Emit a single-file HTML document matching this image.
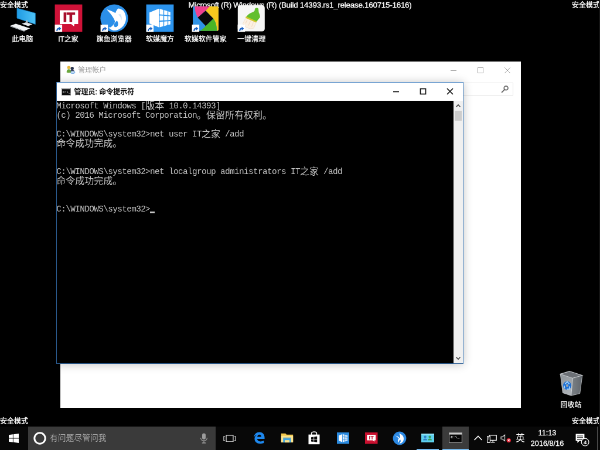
<!DOCTYPE html>
<html lang="zh-CN">
<head>
<meta charset="utf-8">
<title>Windows 10 安全模式</title>
<style>
html,body{margin:0;padding:0;background:#000;overflow:hidden;}
body{width:600px;height:450px;position:relative;}
#desk{position:absolute;left:0;top:0;width:1024px;height:768px;background:#000;transform:scale(0.5859375);transform-origin:0 0;will-change:transform;overflow:hidden;
  font-family:"Liberation Sans","Noto Sans CJK SC",sans-serif;color:#fff;font-size:12px;}
#desk *{box-sizing:border-box;}
.abs{position:absolute;}
.safe,.wm,.lbl,.clk{-webkit-text-stroke:0.3px #fff;}
.safe{position:absolute;font-size:12px;line-height:16px;color:#fff;white-space:nowrap;}
.wm{position:absolute;left:0;width:1024px;top:1px;text-align:center;font-size:13.5px;letter-spacing:-0.3px;line-height:16px;color:#fff;white-space:nowrap;}
.dicon{position:absolute;width:78px;text-align:center;}
.dicon .pic{position:absolute;left:15px;top:0;width:48px;height:48px;}
.dicon .lbl{position:absolute;left:-20px;width:118px;top:52px;text-align:center;font-size:12px;line-height:16px;color:#fff;white-space:nowrap;text-shadow:0 1px 2px rgba(0,0,0,.9);}
.sc{position:absolute;left:0;bottom:0;width:11px;height:11px;}
/* windows */
.win{position:absolute;background:#fff;}
.ctl{position:absolute;top:0;height:30px;width:46px;}
#txt{position:absolute;left:-0.8px;top:1px;font-family:"Liberation Mono","Noto Sans Mono CJK SC",monospace;font-size:14.4px;letter-spacing:-0.64px;color:#c4c4c4;}
#txt .ln{height:16px;line-height:16px;white-space:pre;overflow:visible;}
#txt b{letter-spacing:0;position:relative;top:-2px;font-weight:normal;font-size:16px;line-height:16px;vertical-align:top;display:inline-block;height:16px;font-family:"Noto Sans Mono CJK SC","Noto Sans CJK SC",monospace;}
#txt i{display:inline-block;width:8px;height:3px;background:#c4c4c4;vertical-align:-3px;}
/* taskbar */
#tb{position:absolute;left:0;top:728px;width:1024px;height:40px;background:#080808;}
.tbi{position:absolute;top:0;width:48px;height:40px;}
.tbi svg{position:absolute;}
</style>
</head>
<body>
<div id="desk">

<!-- corner / watermark texts -->
<div class="safe" style="left:0;top:1px;">安全模式</div>
<div class="safe" style="right:0;top:1px;">安全模式</div>
<div class="safe" style="left:0;top:711px;">安全模式</div>
<div class="safe" style="right:0;top:711px;">安全模式</div>
<div class="wm">Microsoft (R) Windows (R) (Build 14393.rs1_release.160715-1616)</div>

<div class="abs" style="left:1021.5px;top:0;width:2.5px;height:728px;background:#141414;"></div>
<!-- DESKTOP ICONS -->
<svg width="0" height="0" style="position:absolute"><defs>
  <g id="scarrow">
    <rect x="0" y="0" width="12.5" height="12.5" fill="#fff"/>
    <path d="M2.6 11 C2.6 7.4 4.4 5.6 7 5.6 V3.4 L10.8 6.8 L7 10.2 V8 C5.4 8 4.6 9.2 4.6 11 Z" fill="#1b62c4"/>
  </g>
</defs></svg>

<!-- 此电脑 -->
<div class="dicon" style="left:-0.8px;top:7px;">
  <svg class="pic" viewBox="0 0 48 48">
    <defs><linearGradient id="mon" x1="0" y1="0" x2="1" y2="0"><stop offset="0" stop-color="#1f9be4"/><stop offset="1" stop-color="#4fc3f7"/></linearGradient></defs>
    <path d="M15 7 L46.3 15.4 V34.4 L15 24 Z" fill="url(#mon)"/>
    <path d="M15 7 L46.3 15.4 V34.4 L15 24 Z" fill="none" stroke="#1683c8" stroke-width="0.8"/>
    <path d="M23 33.6 L30.5 31 L41.5 34.6 L34 37.6 Z" fill="#e4e8ec"/>
    <path d="M30 27 L33.5 28.2 L33.5 33 L30 32 Z" fill="#aeb6bd"/>
    <path d="M3.4 37 L13 33.6 L37.4 41.6 L27.6 45.8 Z" fill="#f2f4f6"/>
    <path d="M3.4 37 L27.6 45.8 L27.6 47 L3.4 38.2 Z" fill="#b4bcc4"/>
  </svg>
  <div class="lbl">此电脑</div>
</div>

<!-- IT之家 -->
<div class="dicon" style="left:77.5px;top:7px;">
  <svg class="pic" viewBox="0 0 48 48">
    <rect x="0.6" y="0.6" width="46.8" height="46.8" fill="#cf1238"/>
    <path d="M9 10.6 H40.4 V34 H34 L33.4 38 L28.4 34 H9 Z" fill="#fff"/>
    <text x="24.8" y="30" text-anchor="middle" font-family="Liberation Sans, sans-serif" font-weight="bold" font-size="21.5" fill="#a80e2c" stroke="#a80e2c" stroke-width="1.3" textLength="20" lengthAdjust="spacingAndGlyphs">IT</text>
    <use href="#scarrow" x="0.6" y="35"/>
  </svg>
  <div class="lbl">IT之家</div>
</div>

<!-- 旗鱼浏览器 -->
<div class="dicon" style="left:155.8px;top:7px;">
  <svg class="pic" viewBox="0 0 48 48">
    <circle cx="24" cy="24.2" r="23.6" fill="#2b8fe8"/>
    <path d="M11 9 C15 10 20 12 26 15.2 C27 12 28.6 9.4 30.6 7.4 C34 7.6 37 9 39.4 11 C42.4 15 44 19.6 44 25 C43.6 33 39 39.6 31.6 43.2 C28.6 44.6 25.4 45.2 22.2 45 C19 44 16.4 42.2 14 39.8 C16.4 40 18.6 39.4 20.4 37.4 C23.4 34.4 25 31.6 25.2 29.4 C23.4 23.4 18 16.4 11 9 Z" fill="#fff"/>
    <path d="M28.6 28.2 C31.2 31.6 31.4 36 28.6 38.6 C25.6 40.6 22.6 38.4 23.4 35 C24.2 32.2 26.4 30.4 28.6 28.2 Z" fill="#2b8fe8"/>
    <path d="M30.4 18 C34 20 36.4 24 35.6 29 C37.6 25 37 20.4 34.4 17 Z" fill="#9fcdf6" opacity=".5"/>
    <use href="#scarrow" x="0.6" y="35"/>
  </svg>
  <div class="lbl">旗鱼浏览器</div>
</div>

<!-- 软媒魔方 -->
<div class="dicon" style="left:234px;top:7px;">
  <svg class="pic" viewBox="0 0 48 48">
    <rect x="0.6" y="0.6" width="46.8" height="46.8" fill="#2c94ee"/>
    <path d="M6.4 14.2 L22 7.8 V39.6 L6.4 33.2 Z" fill="#fff"/>
    <g fill="#fff">
      <path d="M23.4 8 L29.8 9.9 V18 L23.4 17.4 Z"/><path d="M31.2 10.3 L36.8 12 V18.8 L31.2 18.2 Z"/><path d="M38.2 12.4 L41.8 13.5 V19.4 L38.2 19 Z"/>
      <path d="M23.4 19.4 L29.8 19.8 V27.8 L23.4 28.2 Z"/><path d="M31.2 20 L36.8 20.4 V27.4 L31.2 27.7 Z"/><path d="M38.2 20.6 L41.8 20.9 V27 L38.2 27.3 Z"/>
      <path d="M23.4 30.2 L29.8 29.8 V37.8 L23.4 39.6 Z"/><path d="M31.2 29.7 L36.8 29.3 V35.8 L31.2 37.4 Z"/><path d="M38.2 29.2 L41.8 28.9 V34.4 L38.2 35.4 Z"/>
    </g>
    <use href="#scarrow" x="0.6" y="35"/>
  </svg>
  <div class="lbl">软媒魔方</div>
</div>

<!-- 软媒软件管家 -->
<div class="dicon" style="left:311.7px;top:7px;">
  <svg class="pic" viewBox="0 0 48 48">
    <defs><clipPath id="rr"><rect x="0.6" y="0.6" width="46.8" height="46.8" rx="3"/></clipPath></defs>
    <g transform="translate(1.5,3.3) scale(0.9375,0.895)"><g clip-path="url(#rr)">
      <rect x="0" y="0" width="48" height="48" fill="#2f93e6"/>
      <path d="M4 0 H33 L24 9 L9.5 22 C6 15 4 8 4 0 Z" fill="#f2418f"/>
      <path d="M32 0 H48 V48 H44 C44.6 39 42.6 30 38 24 L24 9 Z" fill="#f7c81e"/>
      <path d="M44 48 H12 C17 45.6 21 42.4 24 38 L38 24 C42.6 30 44.6 39 44 48 Z" fill="#49b526"/>
      <path d="M24 9 L38 24 L24 38 L9.5 22 Z" fill="#0a0a0a"/>
    </g></g>
    <use href="#scarrow" x="0.6" y="35"/>
  </svg>
  <div class="lbl">软媒软件管家</div>
</div>

<!-- 一键清理 -->
<div class="dicon" style="left:390.2px;top:7px;">
  <svg class="pic" viewBox="0 0 48 48">
    <rect x="0.8" y="2" width="46" height="44.6" rx="4.5" fill="#f6f6f5"/>
    <path d="M9.4 33.4 L14.4 23.6 L32.4 31 L28 41 C24 42.4 20 42 17.6 40.4 C14.4 39.6 11.4 37 9.4 33.4 Z" fill="#fbf0e2" stroke="#f0dcc6" stroke-width="0.8"/>
    <path d="M14 33 L17 27 M19 36.6 L22.4 29 M24.4 38.6 L27.4 31.4" stroke="#f1d9c0" stroke-width="1.1"/>
    <path d="M30 8 C31.6 6 35 6 36 8 L36.6 14 C38 17 39 20 38.8 22.6 L32.4 30.6 L14.8 22.6 C17.4 18.4 20.6 15.6 24.4 14.4 C27 13.6 29 12.4 29.6 11 Z" fill="#62bf2e"/>
    <path d="M14.4 22.2 L32.6 30.4" stroke="#cfc52a" stroke-width="2.6"/>
    <use href="#scarrow" x="0.6" y="35"/>
  </svg>
  <div class="lbl">一键清理</div>
</div>

<!-- 回收站 -->
<div class="dicon" style="left:935.5px;top:631px;">
  <svg class="pic" viewBox="0 0 48 48">
    <defs><linearGradient id="binf" x1="0" y1="0" x2="0.3" y2="1"><stop offset="0" stop-color="#9aa0a6"/><stop offset="1" stop-color="#bcc1c6"/></linearGradient>
    <linearGradient id="binr" x1="0" y1="0" x2="1" y2="0"><stop offset="0" stop-color="#8a9096"/><stop offset="1" stop-color="#6c7278"/></linearGradient></defs>
    <path d="M5.3 7.6 L26.4 14.4 L23.7 44.2 L9.4 39.4 Z" fill="url(#binf)" opacity=".92"/>
    <path d="M26.4 14.4 L42.8 10 L38.7 40.6 L23.7 44.2 Z" fill="url(#binr)" opacity=".9"/>
    <path d="M5.3 7.4 L21 2.6 L42.8 9.8 L26.4 14.4 Z" fill="#6c7076" stroke="#c4c8cc" stroke-width="1.1"/>
    <path d="M5.3 7.6 L9.4 39.4 L23.7 44.2 L38.7 40.6 L42.8 10" fill="none" stroke="#c6cace" stroke-width="0.8"/>
    <path d="M26.4 14.4 L23.7 44.2" stroke="#dfe3e6" stroke-width="0.9"/>
    <circle cx="17" cy="27" r="7.2" fill="#1c6fd6"/>
    <path d="M13.4 24.4 L17 20.6 L20.6 24.4 M20.8 28.4 L21.4 32.8 L16.6 33.2 M12.6 31.6 L11.8 27.2" stroke="#9fd2ff" stroke-width="1.8" fill="none"/>
    <circle cx="17" cy="27" r="2.2" fill="#9aa2a8"/>
  </svg>
  <div class="lbl">回收站</div>
</div>
<!--/ICONS-->

<!-- BACK WINDOW -->
<!--BACKWIN-->
<div class="win" id="bw" style="left:103px;top:105px;width:785.5px;height:590.5px;background:#fff;">
  <!-- title icon: two users -->
  <svg class="abs" style="left:9.5px;top:6.5px;" width="16" height="14.5" viewBox="0 0 18 17">
    <circle cx="11.6" cy="5.6" r="3.2" fill="#2a3550"/>
    <path d="M7 13.2 C7 9.6 9 8.6 11.6 8.6 C14.4 8.6 16.2 9.8 16.4 12.6 Z" fill="#303c5c"/>
    <ellipse cx="12.6" cy="13.6" rx="5" ry="2.9" fill="#7fb2e6"/>
    <ellipse cx="12.6" cy="13" rx="3.4" ry="1.6" fill="#cfe4f8"/>
    <circle cx="4.8" cy="3.8" r="3.2" fill="#e6b83c"/>
    <path d="M0.4 13.6 C0.4 9 2.2 7.2 4.8 7.2 C7.4 7.2 9 9 9 13.6 C6 14.8 3 14.8 0.4 13.6 Z" fill="#6aa63c"/>
  </svg>
  <div class="abs" style="left:30.2px;top:7px;font-size:12px;line-height:17px;color:#9a9a9a;white-space:nowrap;">管理帐户</div>
  <!-- controls (inactive, grey) -->
  <svg class="abs" style="left:648px;top:0;" width="138" height="30" viewBox="0 0 138 30">
    <path d="M18 15.5 H28" stroke="#a0a0a0" stroke-width="1" fill="none"/>
    <rect x="64.5" y="10.5" width="9" height="9" stroke="#a0a0a0" stroke-width="1" fill="none"/>
    <path d="M110 10 L120 20 M120 10 L110 20" stroke="#a0a0a0" stroke-width="1" fill="none"/>
  </svg>
  <!-- search box -->
  <div class="abs" style="left:540px;top:36px;width:233px;height:22px;border:1px solid #e2e2e2;background:#fff;"></div>
  <svg class="abs" style="left:752px;top:40px;" width="14" height="14" viewBox="0 0 14 14">
    <circle cx="8.6" cy="5.2" r="3.4" stroke="#6a6a6a" stroke-width="1.7" fill="none"/>
    <path d="M6.2 7.8 L1.6 12.4" stroke="#6a6a6a" stroke-width="2" fill="none" stroke-linecap="round"/>
  </svg>
</div>

<div class="win" id="cw" style="left:96px;top:140px;width:695px;height:481px;background:#fff;border:1px solid #3f7fc0;border-left-color:#2c5f96;border-bottom-color:#2c5f96;box-shadow:0 1px 15px 0 rgba(0,0,0,.24);">
  <!-- title icon -->
  <svg class="abs" style="left:8px;top:9px;" width="16" height="13" viewBox="0 0 16 13">
    <rect x="0" y="0" width="16" height="13" fill="#0c0c0c"/>
    <rect x="0" y="0" width="16" height="2.2" fill="#d8d8d8"/>
    <rect x="0.5" y="0.5" width="15" height="12" fill="none" stroke="#8a8a8a" stroke-width="1"/>
    <text x="2" y="9.5" font-family="Liberation Mono, monospace" font-size="5.5" fill="#fff" font-weight="bold">C:\_</text>
  </svg>
  <div class="abs" style="left:29.5px;top:8.2px;font-size:12px;line-height:17px;color:#000;font-weight:500;-webkit-text-stroke:0.25px #000;white-space:nowrap;">管理员: 命令提示符</div>
  <svg class="abs" style="left:556.2px;top:0;" width="138" height="30" viewBox="0 0 138 30">
    <path d="M18 15.5 H28" stroke="#111" stroke-width="1.7" fill="none"/>
    <rect x="64.5" y="10.5" width="9" height="9" stroke="#111" stroke-width="1.7" fill="none"/>
    <path d="M110 10 L120 20 M120 10 L110 20" stroke="#111" stroke-width="1.7" fill="none"/>
  </svg>
  <!-- console -->
  <div class="abs" id="con" style="left:0;top:31px;width:677px;height:448px;background:#000;overflow:hidden;">
<div id="txt">
<div class="ln">Microsoft Windows [<b>版本</b> 10.0.14393]</div>
<div class="ln">(c) 2016 Microsoft Corporation<b>。保留所有权利。</b></div>
<div class="ln"></div>
<div class="ln">C:\WINDOWS\system32&gt;net user IT<b>之家</b> /add</div>
<div class="ln"><b>命令成功完成。</b></div>
<div class="ln"></div>
<div class="ln"></div>
<div class="ln">C:\WINDOWS\system32&gt;net localgroup administrators IT<b>之家</b> /add</div>
<div class="ln"><b>命令成功完成。</b></div>
<div class="ln"></div>
<div class="ln"></div>
<div class="ln">C:\WINDOWS\system32&gt;<i></i></div>
</div>
  </div>
  <!-- scrollbar -->
  <div class="abs" style="left:677px;top:31px;width:16px;height:448px;background:#f0f0f0;">
    <svg class="abs" style="left:0;top:0;" width="16" height="17" viewBox="0 0 16 17"><path d="M4.5 10.5 L8 7 L11.5 10.5" stroke="#404040" stroke-width="1.6" fill="none"/></svg>
    <div class="abs" style="left:2px;top:17px;width:12px;height:17px;background:#cdcdcd;"></div>
    <svg class="abs" style="left:0;bottom:0;" width="16" height="17" viewBox="0 0 16 17"><path d="M4.5 6.5 L8 10 L11.5 6.5" stroke="#404040" stroke-width="1.6" fill="none"/></svg>
  </div>
</div>
<!--/WINS-->

<!-- TASKBAR -->
<div id="tb">
  <!-- start -->
  <svg class="abs" style="left:15px;top:12px;" width="17" height="16" viewBox="0 0 17 16">
    <path d="M0 2.3 L6.9 1.3 V7.6 H0 Z M7.8 1.2 L17 0 V7.6 H7.8 Z M0 8.4 H6.9 V14.7 L0 13.7 Z M7.8 8.4 H17 V16 L7.8 14.8 Z" fill="#fff"/>
  </svg>
  <!-- search box -->
  <div class="abs" style="left:48px;top:0;width:320px;height:40px;background:#3a3a3a;"></div>
  <svg class="abs" style="left:57px;top:9px;" width="22" height="22" viewBox="0 0 22 22"><circle cx="11" cy="11" r="9.2" stroke="#fff" stroke-width="3" fill="none"/></svg>
  <div class="abs" style="left:85px;top:10px;font-size:13.8px;line-height:20px;color:#a6a6a6;white-space:nowrap;">有问题尽管问我</div>
  <!-- mic -->
  <svg class="abs" style="left:340px;top:11px;" width="16" height="18" viewBox="0 0 16 18">
    <rect x="5" y="0.5" width="6" height="10.5" rx="3" fill="#9c9c9c"/>
    <path d="M2.5 8 C2.5 15 13.5 15 13.5 8" stroke="#9c9c9c" stroke-width="1.3" fill="none"/>
    <path d="M8 13.5 V17 M4.8 17 H11.2" stroke="#9c9c9c" stroke-width="1.3" fill="none"/>
  </svg>
  <!-- task view -->
  <svg class="abs" style="left:381px;top:13.6px;" width="22" height="12.8" viewBox="0 0 24 14">
    <rect x="5.5" y="1" width="13" height="12" stroke="#dcdcdc" stroke-width="1.4" fill="none"/>
    <path d="M3.4 3 H1 V11 H3.4 M20.6 3 H23 V11 H20.6" stroke="#dcdcdc" stroke-width="1.3" fill="none"/>
  </svg>
  <!-- edge -->
  <svg class="abs" style="left:431.5px;top:9px;" width="20.5" height="20.5" viewBox="0 0 22 22">
    <path d="M1.2 10.2 C2 4 6.5 0.6 11.6 0.6 C17.6 0.6 21 5 21 10.6 V13 H7.4 C7.6 16 10 17.6 13.2 17.6 C15.8 17.6 18 16.8 19.8 15.8 V20 C17.8 21 15.4 21.6 12.6 21.6 C6.4 21.6 2.6 18 2.6 12.6 C2.6 9.2 4.6 6.4 7.6 5 C4.6 5.6 2.4 7.6 1.2 10.2 Z M7.6 9.2 H15 C15 6.6 13.6 5 11.4 5 C9.4 5 7.9 6.6 7.6 9.2 Z" fill="#1e88ee"/>
  </svg>
  <!-- explorer -->
  <svg class="abs" style="left:479px;top:10px;" width="22" height="18.5" viewBox="0 0 23 20">
    <path d="M0.5 2 H8.5 L10.5 4 H22.5 V18 H0.5 Z" fill="#f3c84b"/>
    <path d="M0.5 6.2 H22.5 V18.5 H0.5 Z" fill="#fbe38e"/>
    <rect x="4.2" y="11.2" width="14.6" height="7.3" fill="#3ea6e6"/>
    <rect x="7.2" y="14.2" width="8.6" height="4.3" fill="#fbe38e"/>
    <rect x="4.2" y="9.6" width="14.6" height="1.6" fill="#2a8bd0"/>
  </svg>
  <!-- store -->
  <svg class="abs" style="left:526px;top:7px;" width="20" height="24" viewBox="0 0 20 24">
    <path d="M5.6 7 V4.6 C5.6 1.2 14.4 1.2 14.4 4.6 V7" stroke="#fff" stroke-width="1.6" fill="none"/>
    <path d="M0.5 6.6 H19.5 V23.2 H0.5 Z" fill="#fff"/>
    <path d="M5 11.2 L9.3 10.6 V14.4 H5 Z M10.2 10.5 L15.2 9.8 V14.4 H10.2 Z M5 15.2 H9.3 V19 L5 18.4 Z M10.2 15.2 H15.2 V19.8 L10.2 19.1 Z" fill="#0b0b0b"/>
  </svg>
  <!-- softmedia cube (blue) -->
  <svg class="abs" style="left:574.5px;top:10px;" width="21.5" height="19.5" viewBox="0 0 22 21" preserveAspectRatio="none">
    <rect x="0" y="0" width="22" height="21" fill="#2b8be0"/>
    <path d="M3.4 5.6 L9.4 3.2 V17.8 L3.4 15.4 Z" fill="#fff"/>
    <path d="M10.4 3.2 L18.6 5.6 V15.4 L10.4 17.8 Z" fill="#e9f3fd"/>
    <path d="M10.4 8 L18.6 9 M10.4 13 L18.6 12 M13 4 V17 M15.8 4.8 V16.2" stroke="#2b8be0" stroke-width="0.9" fill="none"/>
  </svg>
  <!-- IT home -->
  <svg class="abs" style="left:623px;top:10px;" width="21.5" height="19.5" viewBox="0 0 22 21" preserveAspectRatio="none">
    <rect x="0" y="0" width="22" height="21" fill="#c9102f"/>
    <path d="M3.4 4.4 H18.6 V14.6 H16.4 V17.2 L13.6 14.6 H3.4 Z" fill="#fff"/>
    <text x="11" y="13" text-anchor="middle" font-family="Liberation Sans, sans-serif" font-weight="bold" font-size="9.5" fill="#c9102f">IT</text>
  </svg>
  <!-- sailfish browser -->
  <svg class="abs" style="left:670px;top:8px;" width="24" height="24" viewBox="0 0 24 24">
    <circle cx="12" cy="12" r="11.4" fill="#2b88e2"/>
    <path d="M4.2 7.2 C8 8 10.6 9.6 12.6 12.2 C13.6 9 12.8 6.2 10.8 4 C15.6 4.6 19.2 8.4 19 13.2 C18.8 17.6 15.6 20.6 11.4 20.8 C14 19 14.6 16.4 13 14 C11.4 15.4 10.6 17.4 10.8 19.6 C8.6 17.6 8.6 14.6 10.6 12.4 C8.8 10.2 6.8 8.6 4.2 7.2 Z" fill="#fff"/>
  </svg>
  <!-- user accounts (control panel) with running underline -->
  <svg class="abs" style="left:719px;top:12px;" width="22" height="15" viewBox="0 0 22 15">
    <rect x="0" y="0" width="22" height="15" fill="#5fd0ee"/>
    <rect x="0" y="0" width="22" height="2" fill="#8fe2f6"/>
    <circle cx="6.6" cy="5.6" r="2.2" fill="#2f7fc8"/><path d="M3 11.6 C3 7.6 10.2 7.6 10.2 11.6 Z" fill="#2f7fc8"/>
    <circle cx="14.6" cy="5.6" r="2.2" fill="#3aa05a"/><path d="M11 11.6 C11 7.6 18.2 7.6 18.2 11.6 Z" fill="#3aa05a"/>
  </svg>
  <div class="abs" style="left:711px;top:38px;width:38px;height:2px;background:#76b9ed;"></div>
  <!-- cmd active -->
  <div class="abs" style="left:755px;top:0;width:45px;height:40px;background:#3b3b3b;"></div>
  <div class="abs" style="left:755px;top:38px;width:45px;height:2px;background:#76b9ed;"></div>
  <svg class="abs" style="left:766px;top:9.5px;" width="23" height="18" viewBox="0 0 24 20" preserveAspectRatio="none">
    <rect x="0.6" y="0.6" width="22.8" height="18.8" fill="#050505" stroke="#9a9a9a" stroke-width="1.2"/>
    <rect x="1" y="1" width="22" height="3" fill="#c8c8c8"/>
    <text x="3.4" y="11.4" font-family="Liberation Mono, monospace" font-weight="bold" font-size="6.5" fill="#fff">C:\_</text>
  </svg>
  <!-- tray chevron -->
  <svg class="abs" style="left:808px;top:14px;" width="16" height="12" viewBox="0 0 16 12"><path d="M1.5 9 L8 2.5 L14.5 9" stroke="#fff" stroke-width="1.6" fill="none"/></svg>
  <!-- network -->
  <svg class="abs" style="left:831px;top:13.5px;" width="17" height="15" viewBox="0 0 17 15">
    <rect x="4.2" y="0.8" width="12" height="8.6" fill="none" stroke="#fff" stroke-width="1.3"/>
    <path d="M10.2 9.6 V12.4 M7 12.8 H13.6" stroke="#fff" stroke-width="1.3" fill="none"/>
    <path d="M0.8 2.6 H5.4 V13.4 H0.8 Z" fill="#0b0b0b" stroke="#fff" stroke-width="1.1"/>
    <path d="M2 5 H4.2 M2 7.2 H4.2" stroke="#fff" stroke-width="0.9"/>
  </svg>
  <!-- volume with red x -->
  <svg class="abs" style="left:854px;top:13px;" width="20" height="16" viewBox="0 0 20 16">
    <path d="M1 4.6 H3.4 L7.6 1.2 V11.6 L3.4 8.2 H1 Z" fill="none" stroke="#e8e8e8" stroke-width="1.1"/>
    <circle cx="14.2" cy="10.6" r="3.7" fill="#e21f30"/>
    <path d="M12.7 9.1 L15.7 12.1 M15.7 9.1 L12.7 12.1" stroke="#fff" stroke-width="1.2"/>
  </svg>
  <!-- IME -->
  <div class="abs" style="left:878px;top:10px;width:20px;text-align:center;font-size:15.5px;line-height:20px;color:#fff;">英</div>
  <!-- clock -->
  <div class="abs clk" style="left:894px;top:3px;width:80px;text-align:center;font-size:12.7px;line-height:17px;color:#fff;white-space:nowrap;">11:13</div>
  <div class="abs clk" style="left:894px;top:21px;width:80px;text-align:center;font-size:12.7px;line-height:17px;color:#fff;white-space:nowrap;">2016/8/16</div>
  <!-- action center -->
  <svg class="abs" style="left:981px;top:11px;" width="26" height="24" viewBox="0 0 26 24">
    <path d="M1.6 1.6 H16.4 V13.6 H8 L4.4 17 V13.6 H1.6 Z" fill="#fff"/>
    <path d="M4 5 H14 M4 7.8 H14 M4 10.6 H14" stroke="#0b0b0b" stroke-width="1.1"/>
    <circle cx="17.6" cy="15.6" r="6.4" fill="#0b0b0b" stroke="#fff" stroke-width="1.2"/>
    <text x="17.6" y="19.2" text-anchor="middle" font-family="Liberation Sans, sans-serif" font-weight="bold" font-size="9.5" fill="#fff">4</text>
  </svg>
  <div class="abs" style="left:1019px;top:0;width:1px;height:40px;background:#5a5a5a;"></div>
</div>
<!--/TASKBAR-->

</div>
</body>
</html>
